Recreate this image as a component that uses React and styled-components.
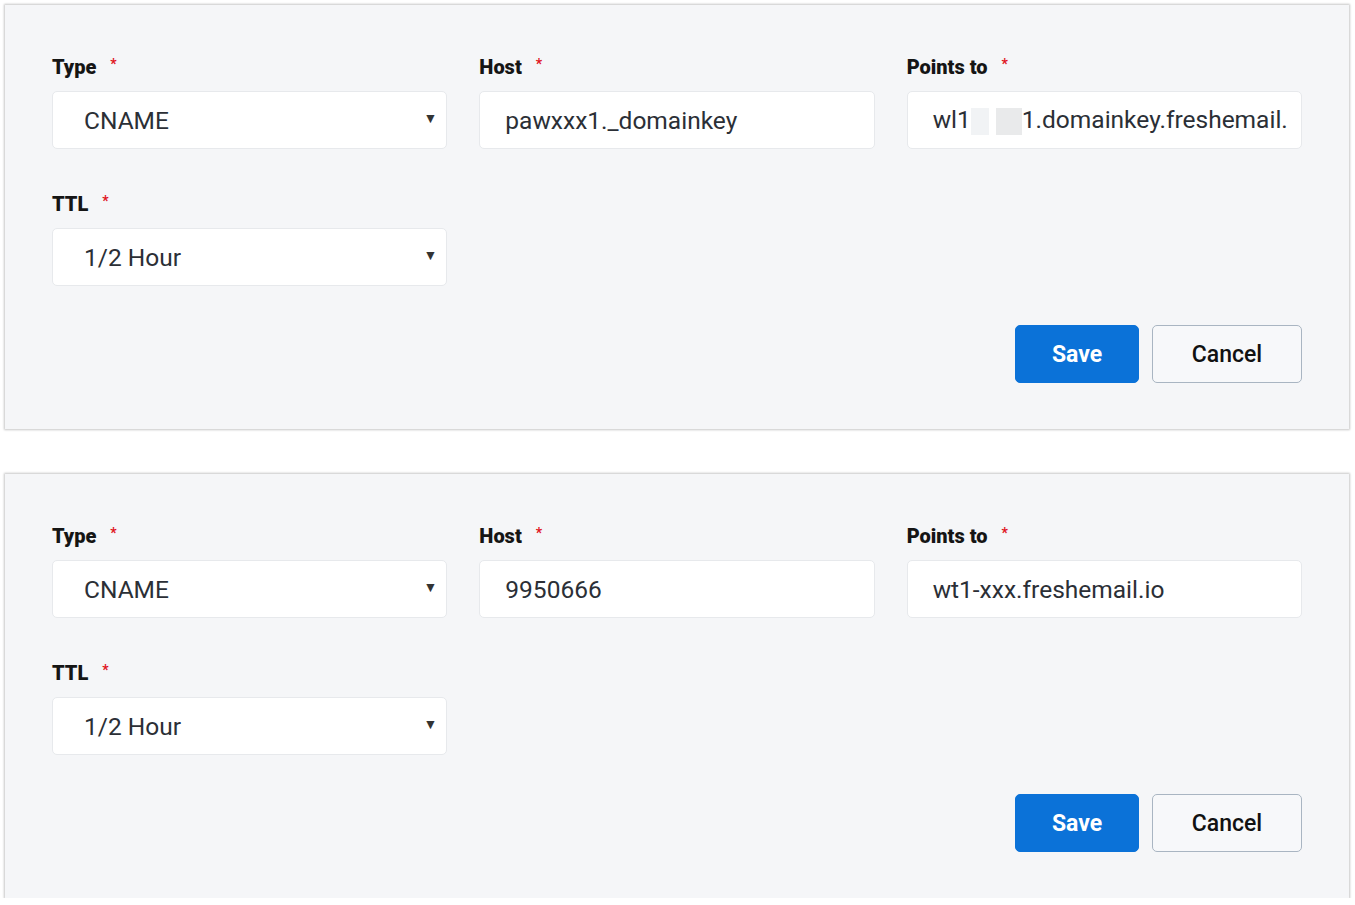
import React from 'react';
import styled, { createGlobalStyle } from 'styled-components';

const GlobalStyle = createGlobalStyle`
    html, body {
        margin: 0;
        padding: 0;
        background: #fff;
        font-family: Roboto, 'Liberation Sans', sans-serif;
    }
`;

const Page = styled.div`
    padding: 5px 6px 0 5px;
    display: flex;
    flex-direction: column;
    gap: 45px;
`;

const Panel = styled.div`
    background-color: #f5f6f8;
    box-shadow: 0 0 2px 1px rgba(0, 0, 0, 0.22);
    padding: 50px 47px 46px 47px;
    display: flex;
    flex-direction: column;
    gap: 43px;
`;

const FieldRow = styled.div`
    display: grid;
    grid-template-columns: repeat(3, 1fr);
    column-gap: 32px;
`;

const Field = styled.div`
    display: flex;
    flex-direction: column;
    gap: 12px;
`;

const Label = styled.div`
    font-size: 20px;
    line-height: 24px;
    height: 24px;
    font-weight: 900;
    color: #151515;
`;

const Required = styled.span`
    color: #e0141e;
    font-size: 14px;
    line-height: 0;
    font-weight: 700;
    margin-left: 14px;
    position: relative;
    top: -5px;
`;

const InputBox = styled.div`
    height: 58px;
    box-sizing: border-box;
    background: #fff;
    border: 1px solid #e7e9ec;
    border-radius: 5px;
    padding: 0 9px 0 ${p => p.$select ? 31 : 25}px;
    display: flex;
    align-items: center;
    justify-content: space-between;
    font-size: 24.5px;
    color: #2b2f36;
    white-space: nowrap;
    overflow: hidden;
`;

const Caret = styled.span`
    font-size: 14px;
    color: #333;
    margin-top: -5px;
`;

const Redacted = styled.span`
    display: inline-block;
    width: ${p => p.$w}px;
    height: 27px;
    margin-left: ${p => p.$ml || 0}px;
    background: ${p => p.$light ? '#f1f3f5' : '#e9eaeb'};
    vertical-align: middle;
`;

const Actions = styled.div`
    display: flex;
    justify-content: flex-end;
    gap: 13px;
    margin-top: -4px;
`;

const Button = styled.button`
    height: 58px;
    width: ${p => p.$primary ? 124 : 150}px;
    border-radius: 5px;
    font-family: Roboto, 'Liberation Sans', sans-serif;
    font-size: 23px;
    font-weight: ${p => p.$primary ? 700 : 500};
    color: ${p => p.$primary ? '#fff' : '#111'};
    background: ${p => p.$primary ? '#0b72d8' : '#f7f8fa'};
    border: 1px solid ${p => p.$primary ? '#0b72d8' : '#a9b5c2'};
    cursor: pointer;
`;

const Select = ({ value }) => (
    <InputBox $select>
        <span>{value}</span>
        <Caret>▼</Caret>
    </InputBox>
);

const RecordForm = ({ host, pointsTo }) => (
    <Panel>
        <FieldRow>
            <Field>
                <Label>Type<Required>*</Required></Label>
                <Select value="CNAME" />
            </Field>
            <Field>
                <Label>Host<Required>*</Required></Label>
                <InputBox>{host}</InputBox>
            </Field>
            <Field>
                <Label>Points to<Required>*</Required></Label>
                <InputBox>{pointsTo}</InputBox>
            </Field>
        </FieldRow>
        <FieldRow>
            <Field>
                <Label>TTL<Required>*</Required></Label>
                <Select value="1/2 Hour" />
            </Field>
        </FieldRow>
        <Actions>
            <Button $primary>Save</Button>
            <Button>Cancel</Button>
        </Actions>
    </Panel>
);

const App = () => {
    return (
        <Page>
            <GlobalStyle />
            <RecordForm
                host="pawxxx1._domainkey"
                pointsTo={
                    <span>
                        wl1<Redacted $w={18} $light /><Redacted $w={26} $ml={7} />1.domainkey.freshemail.
                    </span>
                }
            />
            <RecordForm host="9950666" pointsTo="wt1-xxx.freshemail.io" />
        </Page>
    );
};

export default App;
